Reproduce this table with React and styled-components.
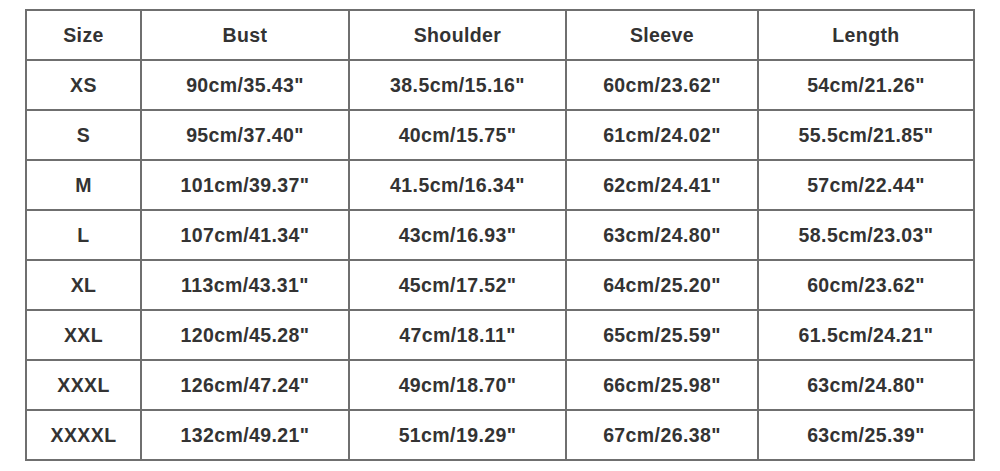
import React from "react";
import styled, { createGlobalStyle } from "styled-components";

const GlobalStyle = createGlobalStyle`
  html, body {
    margin: 0;
    padding: 0;
    background: #ffffff;
  }
`;

const Page = styled.div`
  width: 1000px;
  height: 471px;
  padding: 9px 0 0 25px;
  box-sizing: border-box;
  background: #fff;
`;

const Grid = styled.div`
  display: grid;
  grid-template-columns: 115px 208px 217px 192px 216px;
  grid-auto-rows: 50px;
  width: max-content;
  border-top: 2px solid #6f6f6f;
  border-left: 2px solid #6f6f6f;
  font-family: "Liberation Sans", Arial, sans-serif;
  font-weight: 700;
  font-size: 19.5px;
  letter-spacing: 0.4px;
  color: #333333;
`;

const Cell = styled.div`
  display: flex;
  align-items: center;
  justify-content: center;
  box-sizing: border-box;
  border-right: 2px solid #6f6f6f;
  border-bottom: 2px solid #6f6f6f;
  white-space: nowrap;
`;

const columns = ["Size", "Bust", "Shoulder", "Sleeve", "Length"];

const rows = [
  ["XS", '90cm/35.43"', '38.5cm/15.16"', '60cm/23.62"', '54cm/21.26"'],
  ["S", '95cm/37.40"', '40cm/15.75"', '61cm/24.02"', '55.5cm/21.85"'],
  ["M", '101cm/39.37"', '41.5cm/16.34"', '62cm/24.41"', '57cm/22.44"'],
  ["L", '107cm/41.34"', '43cm/16.93"', '63cm/24.80"', '58.5cm/23.03"'],
  ["XL", '113cm/43.31"', '45cm/17.52"', '64cm/25.20"', '60cm/23.62"'],
  ["XXL", '120cm/45.28"', '47cm/18.11"', '65cm/25.59"', '61.5cm/24.21"'],
  ["XXXL", '126cm/47.24"', '49cm/18.70"', '66cm/25.98"', '63cm/24.80"'],
  ["XXXXL", '132cm/49.21"', '51cm/19.29"', '67cm/26.38"', '63cm/25.39"'],
];

export default function App() {
  return (
    <>
      <GlobalStyle />
      <Page>
        <Grid>
          {columns.map((c) => (
            <Cell key={c}>{c}</Cell>
          ))}
          {rows.map((r) =>
            r.map((v, i) => <Cell key={r[0] + i}>{v}</Cell>)
          )}
        </Grid>
      </Page>
    </>
  );
}
